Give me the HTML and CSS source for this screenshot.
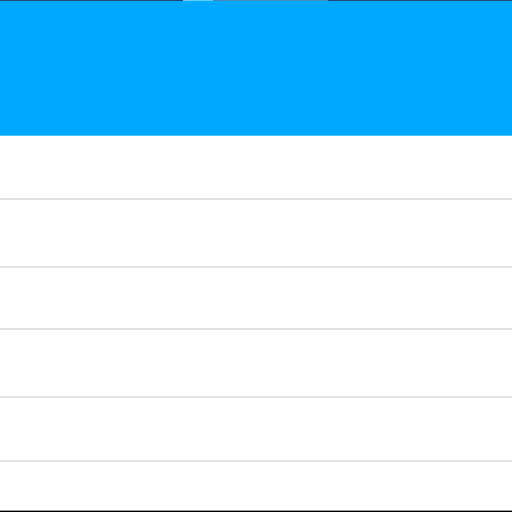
FILE: index.html
```html
<!DOCTYPE html>
<html>
<head>
  <title>List</title>
  <link rel="stylesheet" href="styles.css">
</head>
<body>
  <div class="app">
    <div class="status-strip">
      <span class="seg seg-dark seg-a"></span>
      <span class="seg seg-light"></span>
      <span class="seg seg-mid"></span>
      <span class="seg seg-dark seg-rest"></span>
    </div>
    <div class="header"></div>
    <ul class="list">
      <li class="row row-a"></li>
      <li class="row row-b"></li>
      <li class="row row-c"></li>
      <li class="row row-b"></li>
      <li class="row row-a"></li>
      <li class="row row-last"></li>
    </ul>
    <div class="footer-line"></div>
  </div>
</body>
</html>
```

FILE: styles.css
```css
html, body {
  margin: 0;
  padding: 0;
  background: #ffffff;
  font-family: "Liberation Sans", Arial, sans-serif;
}
.app {
  width: 512px;
  height: 512px;
  display: flex;
  flex-direction: column;
  overflow: hidden;
}
.status-strip {
  display: flex;
  height: 1px;
  flex: none;
}
.seg {
  display: block;
  height: 1px;
}
.seg-dark {
  background-color: #164a78;
}
.seg-a {
  width: 183px;
}
.seg-light {
  width: 30px;
  background-color: #5ccfff;
}
.seg-mid {
  width: 115px;
  background-color: #3d8fbf;
}
.seg-rest {
  flex-grow: 1;
}
.header {
  flex: none;
  height: 134px;
  background-color: #00a8ff;
  border-bottom: 1px solid #4cc2ff;
}
.list {
  list-style: none;
  margin: 0;
  padding: 0;
  flex-grow: 1;
  display: flex;
  flex-direction: column;
}
.row {
  border-bottom: 2px solid #e4e4e4;
  box-sizing: content-box;
}
.row-a {
  height: 62px;
}
.row-b {
  height: 66px;
}
.row-c {
  height: 60px;
}
.row-last {
  flex-grow: 1;
  border-bottom: none;
}
.footer-line {
  flex: none;
  height: 1px;
  background-color: #9a9a9a;
  border-bottom: 1px solid #000000;
}
```
